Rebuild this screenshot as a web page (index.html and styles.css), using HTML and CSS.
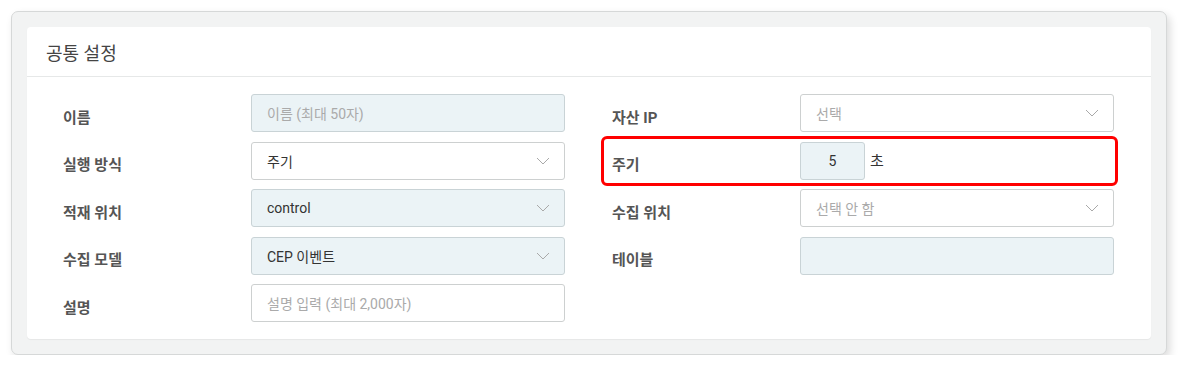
FILE: index.html
```html
<!DOCTYPE html>
<html lang="ko">
<head>
    <meta charset="UTF-8">
    <meta name="viewport" content="width=device-width, initial-scale=1.0">
    <title>공통 설정</title>
    <link rel="stylesheet" href="styles.css">
</head>
<body>
    <div class="panel">
        <div class="card">
            <div class="card-header">공통 설정</div>

            <div class="card-body">
                <div class="form-col">
                    <div class="form-row">
                        <label class="label">이름</label>
                        <div class="field disabled placeholder">이름 (최대 50자)</div>
                    </div>
                    <div class="form-row">
                        <label class="label">실행 방식</label>
                        <div class="field select">
                            <span>주기</span>
                            <svg class="chevron" viewBox="0 0 14 8"><path d="M1 1l6 6 6-6"/></svg>
                        </div>
                    </div>
                    <div class="form-row">
                        <label class="label">적재 위치</label>
                        <div class="field select disabled">
                            <span>control</span>
                            <svg class="chevron" viewBox="0 0 14 8"><path d="M1 1l6 6 6-6"/></svg>
                        </div>
                    </div>
                    <div class="form-row">
                        <label class="label">수집 모델</label>
                        <div class="field select disabled">
                            <span>CEP 이벤트</span>
                            <svg class="chevron" viewBox="0 0 14 8"><path d="M1 1l6 6 6-6"/></svg>
                        </div>
                    </div>
                    <div class="form-row">
                        <label class="label">설명</label>
                        <div class="field placeholder">설명 입력 (최대 2,000자)</div>
                    </div>
                </div>

                <div class="form-col">
                    <div class="form-row">
                        <label class="label">자산 IP</label>
                        <div class="field select placeholder">
                            <span>선택</span>
                            <svg class="chevron" viewBox="0 0 14 8"><path d="M1 1l6 6 6-6"/></svg>
                        </div>
                    </div>
                    <div class="form-row highlight">
                        <label class="label">주기</label>
                        <div class="field disabled short">5</div>
                        <span class="unit">초</span>
                    </div>
                    <div class="form-row">
                        <label class="label">수집 위치</label>
                        <div class="field select placeholder">
                            <span>선택 안 함</span>
                            <svg class="chevron" viewBox="0 0 14 8"><path d="M1 1l6 6 6-6"/></svg>
                        </div>
                    </div>
                    <div class="form-row">
                        <label class="label">테이블</label>
                        <div class="field disabled"></div>
                    </div>
                </div>
            </div>
        </div>
    </div>
</body>
</html>
```

FILE: styles.css
```css
* {
    margin: 0;
    padding: 0;
    box-sizing: border-box;
}
body {
    background-color: white;
    font-family: Roboto, 'Noto Sans CJK KR', sans-serif;
    padding: 11px 22px 0 11px;
}
.panel {
    background: #f2f3f3;
    border: 1px solid #d6d8d8;
    border-radius: 7px;
    padding: 15px 15px 15px 15px;
    box-shadow: 3px 4px 9px rgba(0, 0, 0, 0.14);
}
.card {
    background: #FFFFFF;
    border-radius: 4px;
    box-shadow: 0 1px 1px rgba(0, 0, 0, 0.05);
}
.card-header {
    height: 50px;
    display: flex;
    align-items: center;
    padding-left: 19px;
    padding-top: 1px;
    font-size: 18px;
    font-weight: 400;
    color: #444;
    border-bottom: 1px solid #e6e8e8;
}
.card-body {
    display: flex;
    gap: 47px;
    padding: 17px 0 17px 36px;
}
.form-col {
    display: flex;
    flex-direction: column;
    gap: 9.5px;
}
.form-row {
    display: flex;
    align-items: center;
    height: 38px;
    position: relative;
}
.label {
    width: 188px;
    font-size: 15px;
    font-weight: 700;
    color: #555;
    padding-top: 6px;
}
.field {
    width: 314px;
    height: 38px;
    border: 1px solid #cdd0d0;
    border-radius: 3px;
    background: #FFFFFF;
    display: flex;
    align-items: center;
    justify-content: space-between;
    padding: 0 14px 0 15px;
    font-size: 14px;
    color: #333;
}
.field.disabled {
    background: #ebf3f6;
    border-color: #c9d3d6;
}
.field.placeholder {
    color: #aaa;
}
.field.short {
    width: 65px;
    justify-content: center;
    padding: 0;
    color: #333;
}
.chevron {
    width: 14px;
    height: 8px;
    fill: none;
    stroke: #a9a9a9;
    stroke-width: 1;
}
.unit {
    font-size: 15px;
    color: #333;
    margin-left: 5px;
    align-self: flex-start;
    padding-top: 7px;
}
.highlight::after {
    content: "";
    position: absolute;
    top: -6px;
    left: -11px;
    right: -4px;
    bottom: -6px;
    border: 3px solid #ff0000;
    border-radius: 6px;
}
```
